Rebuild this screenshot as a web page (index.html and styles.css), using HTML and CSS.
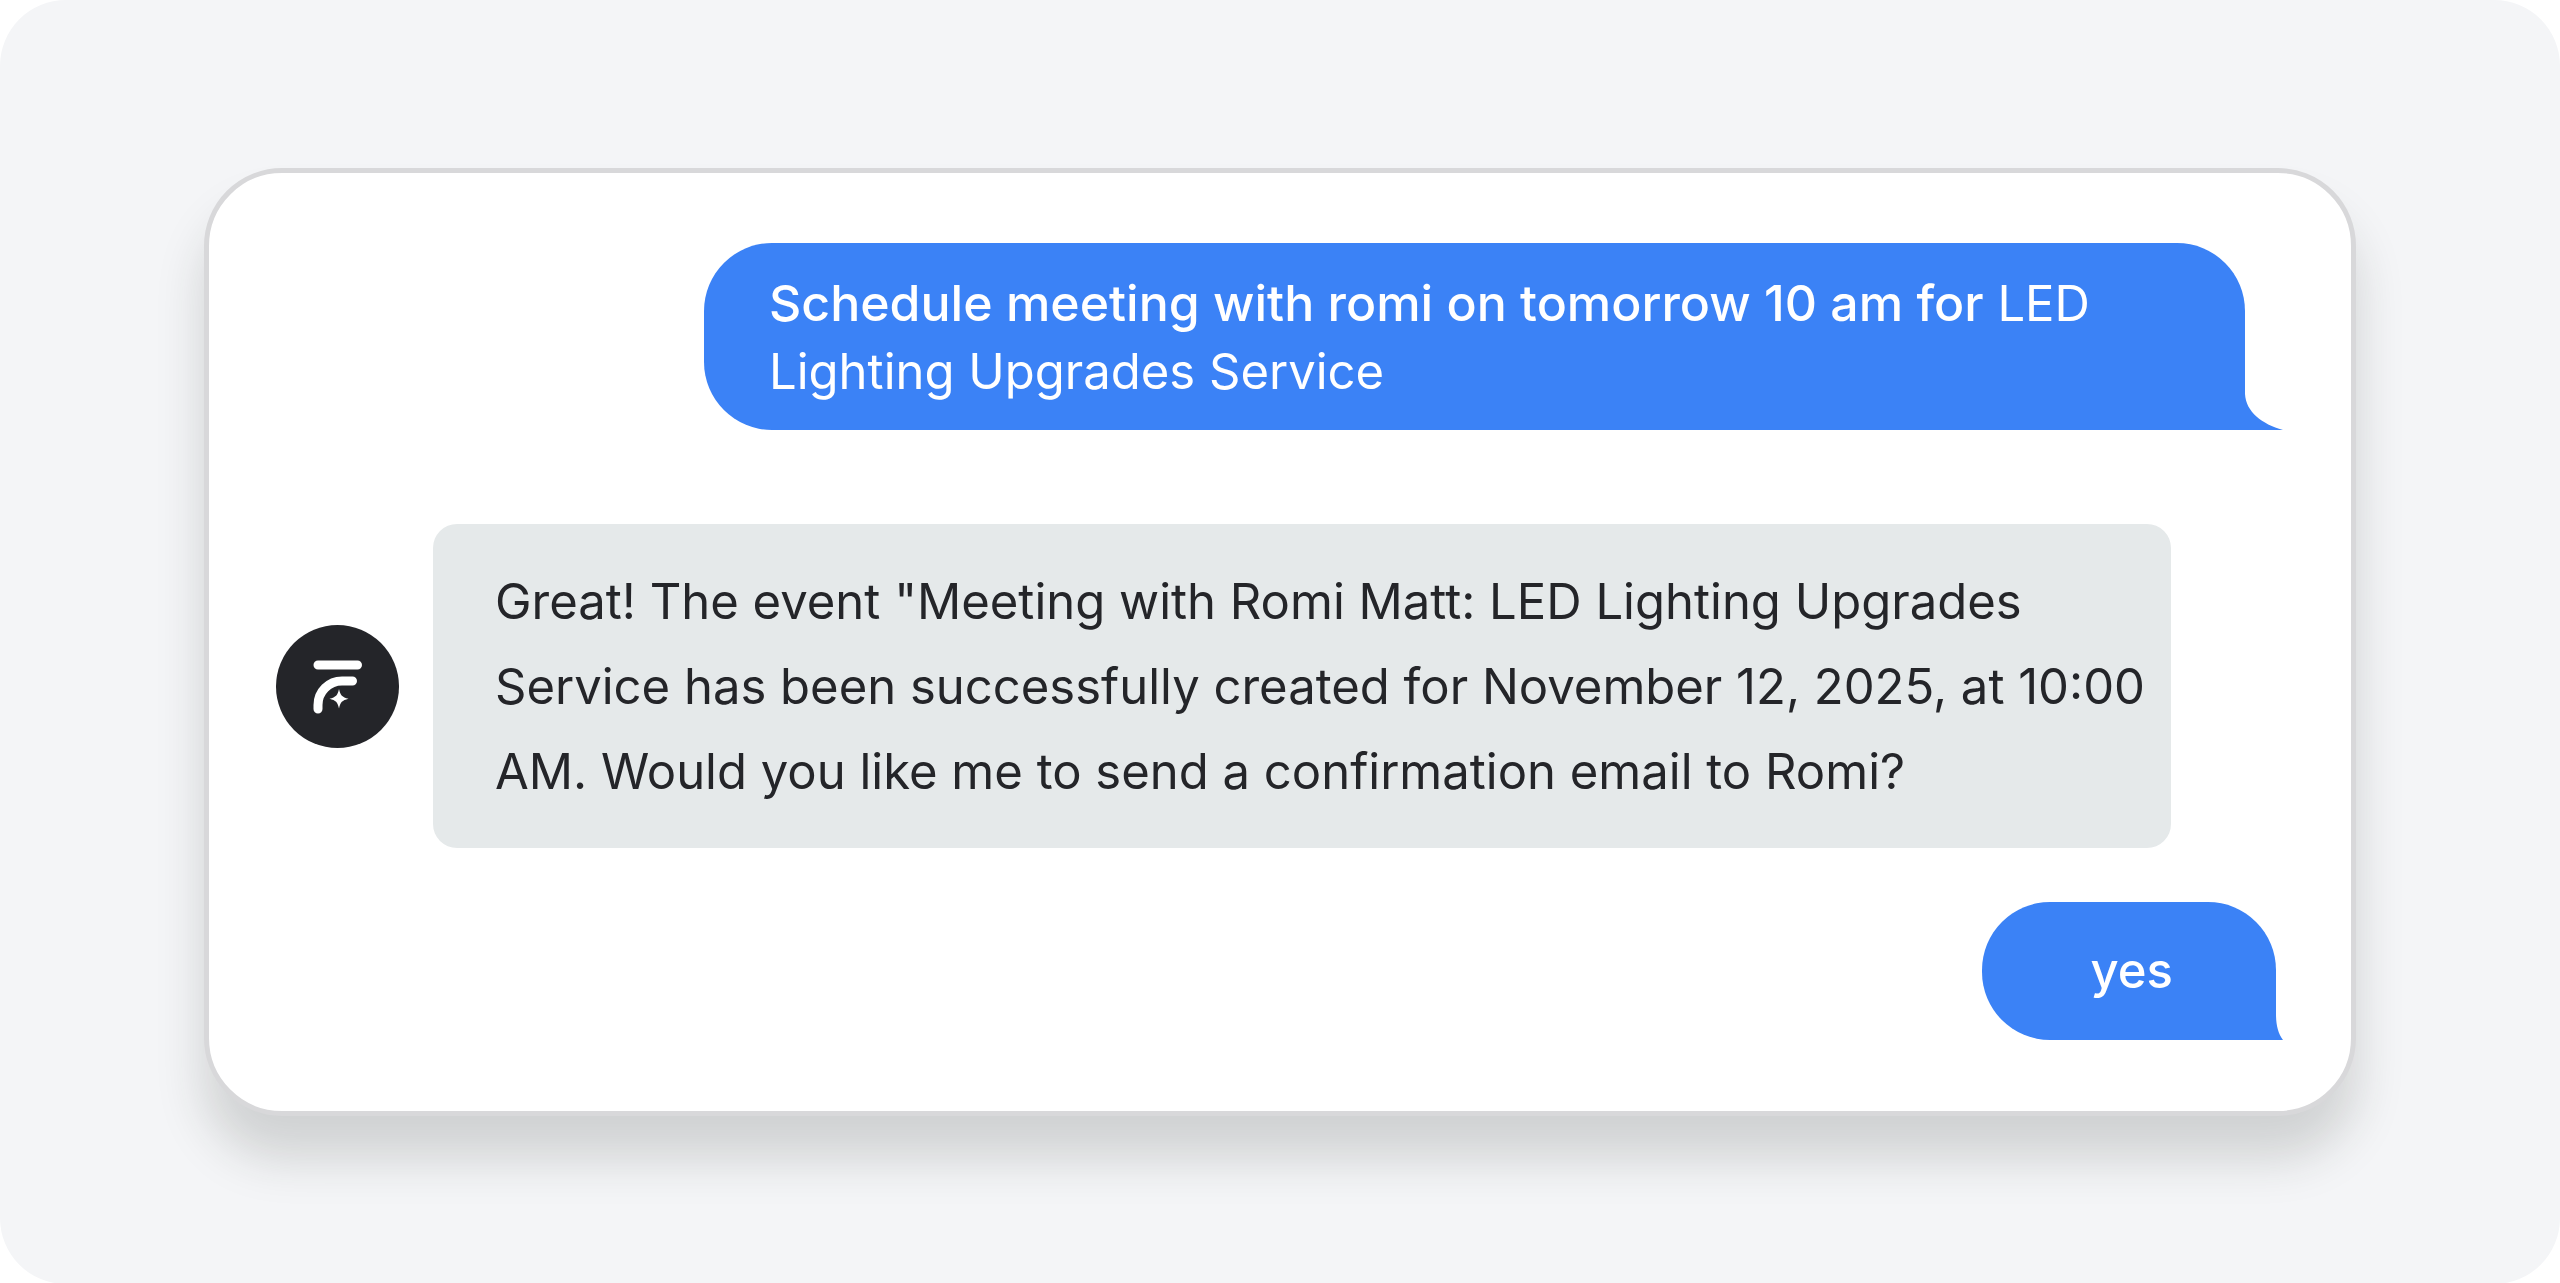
FILE: index.html
```html
<!DOCTYPE html>
<html lang="en">
<head>
    <meta charset="UTF-8">
    <meta name="viewport" content="width=device-width, initial-scale=1.0">
    <title>Chat</title>
    <link rel="stylesheet" href="styles.css">
</head>
<body>
    <main class="page">
        <section class="chat-card">
            <div class="message user">
                <p class="bubble"><strong>Schedule meeting with romi on tomorrow 10 am for</strong> LED Lighting Upgrades Service</p>
                <svg class="tail" viewBox="0 0 38 36" aria-hidden="true">
                    <path d="M0 0C1 18 17 30 38 36H0Z"/>
                </svg>
            </div>

            <div class="message bot">
                <svg class="avatar" viewBox="0 0 123 123" role="img" aria-label="Assistant">
                    <circle class="avatar-bg" cx="61.5" cy="61.5" r="61.5"/>
                    <path class="avatar-line" d="M42 40H81.500M42 84V80A24 24 0 0 1 66 56H76.500"/>
                    <path class="avatar-star" d="M63 64C64.500 70.500 66 72 72.500 73.800C66 75.600 64.500 77 63 83.500C61.500 77 60 75.600 53.500 73.800C60 72 61.500 70.500 63 64Z"/>
                </svg>
                <p class="bubble">Great! The event "Meeting with Romi Matt: LED Lighting Upgrades Service has been successfully created for November 12, 2025, at 10:00 AM. Would you like me to send a confirmation email to Romi?</p>
            </div>

            <div class="message user short">
                <p class="bubble">yes</p>
                <svg class="tail" viewBox="0 0 7 26" aria-hidden="true">
                    <path d="M0 0C0 11 2 19 7 26H0Z"/>
                </svg>
            </div>
        </section>
    </main>
</body>
</html>
```

FILE: styles.css
```css
body {
    margin: 0;
    background-color: #fff;
    font-family: Inter, sans-serif;
    font-size: 49px;
    line-height: 68px;
    color: #242529;
}

.page {
    box-sizing: border-box;
    min-height: 100vh;
    padding: 168px 204px;
    border-radius: 66px;
    background-color: #f4f5f7;
}

.chat-card {
    display: flex;
    flex-direction: column;
    padding: 70px 68px 71px 67px;
    border: 5px solid #d8d8da;
    border-radius: 78px;
    background-color: #fff;
    box-shadow: 0 42px 48px rgba(36, 40, 36, 0.17);
}

.message {
    display: flex;
    align-items: center;
}

.bubble {
    box-sizing: border-box;
    margin: 0;
}

.user {
    position: relative;
    align-self: flex-end;
    max-width: 1541px;
    margin-right: 38px;
}

.user .bubble {
    padding: 26px 66px 24px 65px;
    border-radius: 68px 68px 0 68px;
    background-color: #3b82f6;
    color: #fff;
}

.user strong {
    font-size: 50px;
    font-weight: 500;
}

/* tail hangs off the bottom right corner */
.tail {
    position: absolute;
    left: 100%;
    bottom: 0;
    width: 38px;
    fill: #3b82f6;
}

.bot {
    gap: 34px;
    margin: 94px 112px 54px 0;
}

.bot .bubble {
    flex: 1;
    padding: 35px 16px 34px 62px;
    border-radius: 24px;
    background-color: #e5e9ea;
    line-height: 85px;
}

.avatar {
    flex: none;
    width: 123px;
}

.avatar-bg {
    fill: #242529;
}

.avatar-line {
    fill: none;
    stroke: #fff;
    stroke-width: 9;
    stroke-linecap: round;
}

.avatar-star {
    fill: #fff;
}

.short {
    margin-right: 7px;
}

.user.short .bubble {
    padding: 35px 103px 35px 109px;
    font-weight: 500;
}

.short .tail {
    width: 7px;
}
```
